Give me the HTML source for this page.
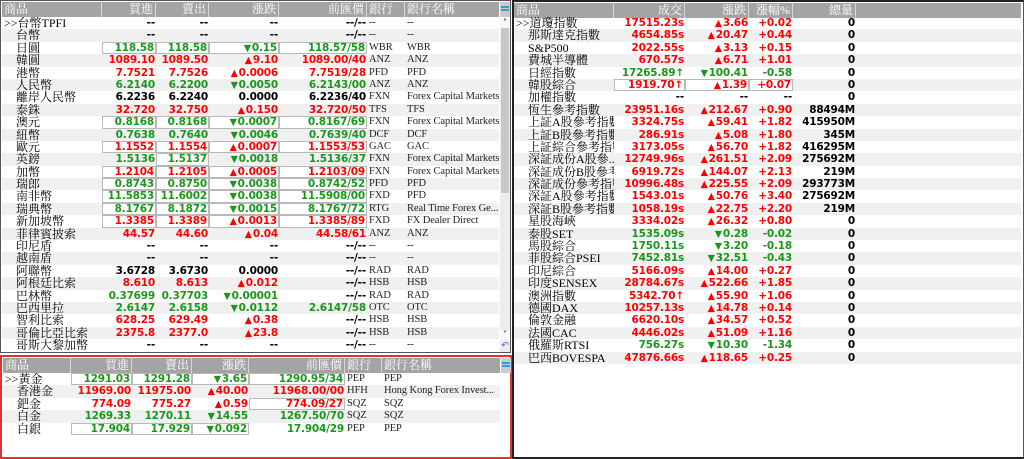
<!DOCTYPE html>
<html><head><meta charset="utf-8"><style>
*{margin:0;padding:0;box-sizing:border-box}
body{width:1024px;height:459px;background:#fff;position:relative;overflow:hidden;font-family:"DejaVu Sans","Liberation Sans",sans-serif}
.p{position:absolute;background:#fff}
.hd{position:absolute;left:2px;top:2px;height:15px;background:#a4a4a4;display:flex;color:#fff;font-family:"Liberation Serif","Noto Serif CJK SC",serif;font-size:12px;line-height:15px}
.hd span{border-right:1px solid #d8d8d8;padding:0 2px;white-space:nowrap;overflow:hidden}
.rows{position:absolute;left:2px}
.r{height:12.4px;display:flex;line-height:12.4px;white-space:nowrap;overflow:hidden}
.r:nth-child(even){background:#f0f0f0}
.r>span{overflow:hidden;display:block;height:12.4px}
.n{font-family:"Liberation Serif","Noto Serif CJK SC",serif;font-size:12px;line-height:12.4px;color:#000;padding-left:2px}
.v{font-weight:bold;font-size:10.5px;line-height:12.4px;text-align:right;padding-right:1px;letter-spacing:-0.2px}
.t{font-family:"Liberation Serif",serif;font-size:10.5px;line-height:12.4px;color:#222;padding-left:2px;letter-spacing:-0.1px}
.R{color:#f00}.G{color:#1a961a}.K{color:#000}
.r>span.b{border:1px solid #b8b8b8;background:#fff;line-height:10.4px}
.u{font-size:9.5px;display:inline;padding-right:1px}
</style></head><body>

<div class="p" style="left:0;top:0;width:511px;height:353px;border:1px solid #555">
<div class="hd" style="left:1px;top:1px;width:497px">
<span style="width:100px">商品</span><span style="width:54px;text-align:right">買進</span><span style="width:53px;text-align:right">賣出</span><span style="width:70px;text-align:right">漲跌</span><span style="width:88px;text-align:right">前匯價</span><span style="width:38px">銀行</span><span style="width:94px;border:0">銀行名稱</span>
</div>
<div style="position:absolute;left:499px;top:1px;width:10px;height:15px;background:#ccc"><div style="margin:4px 1px;height:5px;border-top:2px solid #29a3d6;border-bottom:2px solid #29a3d6"></div></div>
<div style="position:absolute;left:499px;top:17px;width:10px;height:334px;background:#ececec">
<div style="height:10px;font-size:8px;text-align:center;background:#f8f8f8">˄</div>
<div style="margin:0 1px;height:165px;background:#c8c8c8"></div>
<div style="position:absolute;bottom:12px;width:10px;height:10px;font-size:8px;text-align:center;background:#f8f8f8">˅</div>
<div style="position:absolute;bottom:1px;width:10px;height:10px;font-size:9px;color:#36c;text-align:center">↶</div>
</div>
<div class="rows" style="left:1px;top:16px;width:497px" id="L"></div>
</div>

<div class="p" style="left:0;top:355px;width:512px;height:104px;border:2px solid #d33">
<div class="hd" style="left:1px;top:1px;width:497px">
<span style="width:68px">商品</span><span style="width:61px;text-align:right">買進</span><span style="width:60px;text-align:right">賣出</span><span style="width:57px;text-align:right">漲跌</span><span style="width:96px;text-align:right">前匯價</span><span style="width:37px">銀行</span><span style="width:118px;border:0">銀行名稱</span>
</div>
<div style="position:absolute;left:499px;top:1px;width:10px;height:15px;background:#ccc"><div style="margin:4px 1px;height:5px;border-top:2px solid #29a3d6;border-bottom:2px solid #29a3d6"></div></div>
<div class="rows" style="left:1px;top:16px;width:497px" id="B"></div>
</div>

<div class="p" style="left:512px;top:0;width:512px;height:459px;border:2px solid #222;border-right:1px solid #555">
<div class="hd" style="left:0;top:1px;width:507px">
<span style="width:100px">商品</span><span style="width:71px;text-align:right">成交</span><span style="width:64px;text-align:right">漲跌</span><span style="width:44px;text-align:right">漲幅%</span><span style="width:63px;text-align:right">總量</span><span style="flex:1;border:0"></span>
</div>
<div class="rows" style="left:0;top:15px;width:507px" id="RR"></div>
</div>

<script>
function row(cells){return '<div class="r">'+cells+'</div>';}
function s(w,c,t){return '<span style="width:'+w+'px" class="'+c+'">'+t+'</span>';}
const up='<span class="u">▲</span>',dn='<span class="u">▼</span>';
const L=[
['>>台幣TPFI','--','--','--','--/--','--','--','K',''],
['　台幣','--','--','--','--/--','--','--','K',''],
['　日圓','118.58','118.58',dn+'0.15','118.57/58','WBR','WBR','G','bbbb'],
['　韓圓','1089.10','1089.50',up+'9.10','1089.00/40','ANZ','ANZ','R',''],
['　港幣','7.7521','7.7526',up+'0.0006','7.7519/28','PFD','PFD','R',''],
['　人民幣','6.2140','6.2200',dn+'0.0050','6.2143/00','ANZ','ANZ','G',''],
['　離岸人民幣','6.2236','6.2240','0.0000','6.2236/40','FXN','Forex Capital Markets','K',''],
['　泰銖','32.720','32.750',up+'0.150','32.720/50','TFS','TFS','R',''],
['　澳元','0.8168','0.8168',dn+'0.0007','0.8167/69','FXN','Forex Capital Markets','G','bbbb'],
['　紐幣','0.7638','0.7640',dn+'0.0046','0.7639/40','DCF','DCF','G',''],
['　歐元','1.1552','1.1554',up+'0.0007','1.1553/53','GAC','GAC','R','bbbb'],
['　英鎊','1.5136','1.5137',dn+'0.0018','1.5136/37','FXN','Forex Capital Markets','G','.b..'],
['　加幣','1.2104','1.2105',up+'0.0005','1.2103/09','FXN','Forex Capital Markets','R','bbbb'],
['　瑞郎','0.8743','0.8750',dn+'0.0038','0.8742/52','PFD','PFD','G','bbbb'],
['　南非幣','11.5853','11.6002',dn+'0.0038','11.5908/00','FXD','PFD','G','bbbb'],
['　瑞典幣','8.1767','8.1872',dn+'0.0015','8.1767/72','RTG','Real Time Forex Ge...','G','bbbb'],
['　新加坡幣','1.3385','1.3389',up+'0.0013','1.3385/89','FXD','FX Dealer Direct','R','bbbb'],
['　菲律賓披索','44.57','44.60',up+'0.04','44.58/61','ANZ','ANZ','R',''],
['　印尼盾','--','--','--','--/--','--','--','K',''],
['　越南盾','--','--','--','--/--','--','--','K',''],
['　阿聯幣','3.6728','3.6730','0.0000','--/--','RAD','RAD','K',''],
['　阿根廷比索','8.610','8.613',up+'0.012','--/--','HSB','HSB','R',''],
['　巴林幣','0.37699','0.37703',dn+'0.00001','--/--','RAD','RAD','G',''],
['　巴西里拉','2.6147','2.6158',dn+'0.0112','2.6147/58','OTC','OTC','G',''],
['　智利比索','628.25','629.49',up+'0.38','--/--','HSB','HSB','R',''],
['　哥倫比亞比索','2375.8','2377.0',up+'23.8','--/--','HSB','HSB','R',''],
['　哥斯大黎加幣','--','--','--','--/--','--','--','K','']];
function build(data,w){let h='';for(const d of data){const c=d[7],bx=d[8]||'';const k=i=>bx[i]==='b'?' b':'';
const cc=(d[1]==='--')?'K':c;
h+=row(s(w[0],'n',d[0])+s(w[1],'v '+cc+k(0),d[1])+s(w[2],'v '+cc+k(1),d[2])+s(w[3],'v '+cc+k(2),d[3])+s(w[4],'v '+(d[4]==='--/--'?'K':cc)+k(3),d[4])+s(w[5],'t',d[5])+s(w[6],'t',d[6]));}return h;}
document.getElementById('L').innerHTML=build(L,[100,54,53,70,88,38,94]);
const B=[
['>>黃金','1291.03','1291.28',dn+'3.65','1290.95/34','PEP','PEP','G','bbbb'],
['　香港金','11969.00','11975.00',up+'40.00','11968.00/00','HFH','Hong Kong Forex Invest...','R',''],
['　鈀金','774.09','775.27',up+'0.59','774.09/27','SQZ','SQZ','R','...b'],
['　白金','1269.33','1270.11',dn+'14.55','1267.50/70','SQZ','SQZ','G',''],
['　白銀','17.904','17.929',dn+'0.092','17.904/29','PEP','PEP','G','bbb.']];
document.getElementById('B').innerHTML=build(B,[68,61,60,57,96,37,118]);
const R=[
['>>道瓊指數','17515.23s',up+'3.66','+0.02','0','R'],
['　那斯達克指數','4654.85s',up+'20.47','+0.44','0','R'],
['　S&amp;P500','2022.55s',up+'3.13','+0.15','0','R'],
['　費城半導體','670.57s',up+'6.71','+1.01','0','R'],
['　日經指數','17265.89↑',dn+'100.41','-0.58','0','G'],
['　韓股綜合','1919.70↑',up+'1.39','+0.07','0','R','b'],
['　加權指數','--','--','--','0','K'],
['　恆生參考指數','23951.16s',up+'212.67','+0.90','88494M','R'],
['　上証A股參考指數','3324.75s',up+'59.41','+1.82','415950M','R'],
['　上証B股參考指數','286.91s',up+'5.08','+1.80','345M','R'],
['　上証綜合參考指數','3173.05s',up+'56.70','+1.82','416295M','R'],
['　深証成份A股參...','12749.96s',up+'261.51','+2.09','275692M','R'],
['　深証成份B股參考...','6919.72s',up+'144.07','+2.13','219M','R'],
['　深証成份參考指數','10996.48s',up+'225.55','+2.09','293773M','R'],
['　深証A股參考指數','1543.01s',up+'50.76','+3.40','275692M','R'],
['　深証B股參考指數','1058.19s',up+'22.75','+2.20','219M','R'],
['　星股海峽','3334.02s',up+'26.32','+0.80','0','R'],
['　泰股SET','1535.09s',dn+'0.28','-0.02','0','G'],
['　馬股綜合','1750.11s',dn+'3.20','-0.18','0','G'],
['　菲股綜合PSEI','7452.81s',dn+'32.51','-0.43','0','G'],
['　印尼綜合','5166.09s',up+'14.00','+0.27','0','R'],
['　印度SENSEX','28784.67s',up+'522.66','+1.85','0','R'],
['　澳洲指數','5342.70↑',up+'55.90','+1.06','0','R'],
['　德國DAX','10257.13s',up+'14.78','+0.14','0','R'],
['　倫敦金融','6620.10s',up+'34.57','+0.52','0','R'],
['　法國CAC','4446.02s',up+'51.09','+1.16','0','R'],
['　俄羅斯RTSI','756.27s',dn+'10.30','-1.34','0','G'],
['　巴西BOVESPA','47876.66s',up+'118.65','+0.25','0','R']];
let h='';for(const d of R){const b=d[6]?' b':'';h+=row(s(100,'n',d[0])+s(71,'v '+d[5]+b,d[1])+s(64,'v '+d[5]+b,d[2])+s(44,'v '+d[5]+b,d[3])+s(63,'v K',d[4]));}
document.getElementById('RR').innerHTML=h;
</script>
</body></html>
